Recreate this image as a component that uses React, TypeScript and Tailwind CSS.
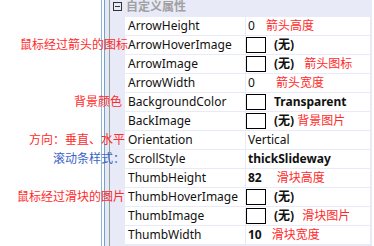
// PropertyGrid — a WinForms-style property grid for a scrollbar control,
// with hand-written red notes explaining each property.
type Row = {
  name: string
  value: string
  bold?: boolean
  swatch?: boolean
  note?: string
  noteGap?: string
  left?: string
  leftPad?: string
  leftBlue?: boolean
}

const rows: Row[] = [
  { name: 'ArrowHeight', value: '0', note: '箭头高度', noteGap: 'ml-[11px]' },
  { name: 'ArrowHoverImage', value: '(无)', bold: true, swatch: true, left: '鼠标经过箭头的图标', leftPad: 'pr-0' },
  { name: 'ArrowImage', value: '(无)', bold: true, swatch: true, note: '箭头图标', noteGap: 'ml-[10px]' },
  { name: 'ArrowWidth', value: '0', note: '箭头宽度', noteGap: 'ml-[21px]' },
  { name: 'BackgroundColor', value: 'Transparent', bold: true, swatch: true, left: '背景颜色', leftPad: 'pr-[6px]' },
  { name: 'BackImage', value: '(无)', bold: true, swatch: true, note: '背景图片', noteGap: 'ml-[3px]' },
  { name: 'Orientation', value: 'Vertical', left: '方向：垂直、水平', leftPad: 'pr-[3px]' },
  { name: 'ScrollStyle', value: 'thickSlideway', bold: true, left: '滚动条样式：', leftPad: 'pr-[3px]', leftBlue: true },
  { name: 'ThumbHeight', value: '82', bold: true, note: '滑块高度', noteGap: 'ml-[15px]' },
  { name: 'ThumbHoverImage', value: '(无)', bold: true, swatch: true, left: '鼠标经过滑块的图片', leftPad: 'pr-[3px]' },
  { name: 'ThumbImage', value: '(无)', bold: true, swatch: true, note: '滑块图片', noteGap: 'ml-[8px]' },
  { name: 'ThumbWidth', value: '10', bold: true, note: '滑块宽度', noteGap: 'ml-[10px]' },
]

const font = "font-['Noto_Sans','Noto_Sans_CJK_SC',sans-serif]"

export default function App() {
  return (
    <div className={`relative flex w-[374px] h-[246px] overflow-hidden bg-white ${font}`}>
      <div className="w-[101px] shrink-0" />
      {/* splitter lines */}
      <div className="w-px shrink-0 bg-[#8fb6dc]" />
      <div className="w-[2px] shrink-0 bg-white" />
      <div className="w-px shrink-0 bg-[#7c9fca]" />
      <div className="w-[4px] shrink-0 bg-[#e2eaf3]" />
      <div className="w-px shrink-0 bg-[#9c9c9c]" />

      <div className="flex w-[262px] shrink-0 flex-col bg-[#e8eaf7]">
        <div className="flex h-[16px] items-start pt-px">
          <div className="ml-[3px] mt-px flex h-[9px] w-[9px] items-center justify-center border border-[#333]">
            <div className="h-px w-[5px] bg-[#333]" />
          </div>
          <span className="ml-[4px] text-[12px] leading-[12px] font-bold text-[#a0a0a0]">自定义属性</span>
        </div>
        {rows.map((r) => (
          <div key={r.name} className="mt-px flex h-[18px] pl-[15px]">
            <div className="flex w-[120px] items-center bg-white pl-[3px] text-[12px] text-[#111]">{r.name}</div>
            <div className="ml-px flex w-[124px] items-center bg-white text-[12px] text-[#111]">
              {r.swatch ? (
                <div className="mr-[8px] h-[16px] w-[20px] border border-black bg-white" />
              ) : (
                <span className="w-[2px]" />
              )}
              <span className={r.bold ? 'font-bold' : ''}>{r.value}</span>
              {r.note && <span className={`${r.noteGap} whitespace-nowrap text-[#ff2b2b]`}>{r.note}</span>}
            </div>
          </div>
        ))}
      </div>

      {/* notes written over the left edge of the grid */}
      <div className="absolute left-0 top-0 flex w-[128px] flex-col">
        <div className="h-[16px]" />
        {rows.map((r) => (
          <div key={r.name} className={`mt-px flex h-[18px] items-center justify-end ${r.leftPad ?? ''}`}>
            {r.left && (
              <span className={`whitespace-nowrap text-[12px] ${r.leftBlue ? 'text-[#3a62c8]' : 'text-[#ff2b2b]'}`}>
                {r.left}
              </span>
            )}
          </div>
        ))}
      </div>
    </div>
  )
}
